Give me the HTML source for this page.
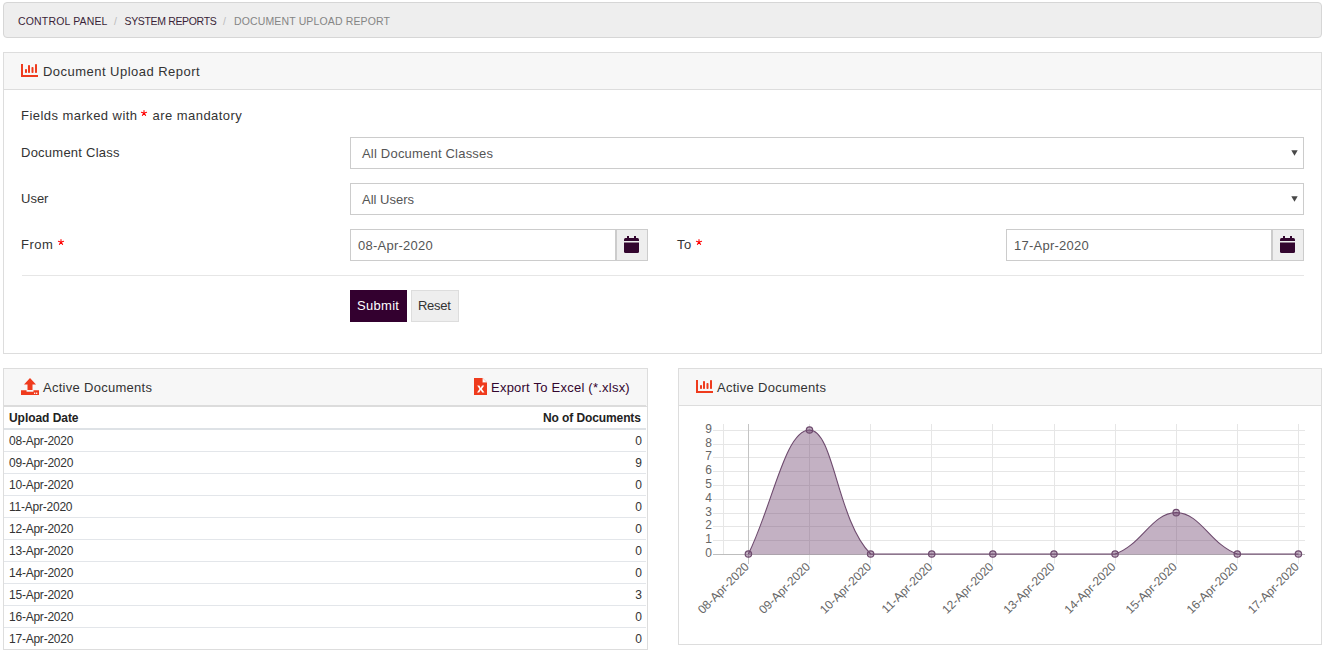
<!DOCTYPE html>
<html><head><meta charset="utf-8">
<style>
*{box-sizing:border-box;margin:0;padding:0}
html,body{width:1325px;height:662px;overflow:hidden;background:#fff}
body{font-family:"Liberation Sans",sans-serif;font-size:13px;color:#333;position:relative}
.a{position:absolute}
.t{position:absolute;line-height:1;white-space:nowrap}
.bc{left:3px;top:2px;width:1319px;height:36px;background:#eee;border:1px solid #d6d6d6;border-radius:4px}
.bt{font-size:10.5px;color:#3a1f38}
.panel{position:absolute;border:1px solid #ddd;background:#fff}
.ph{position:absolute;left:0;top:0;right:0;background:#f7f7f7;border-bottom:1px solid #ddd}
.f13{font-size:13px}
.inp{position:absolute;border:1px solid #ccc;background:#fff}
.red{color:#e8141e}
.addon{position:absolute;background:#eee;border:1px solid #ccc}
.gray{color:#555}
.row{position:absolute;left:4px;width:642px;height:1px;background:#e3e6ea}
.td{font-size:12px;color:#333;letter-spacing:-0.23px}
.num{font-size:12px;color:#333}
</style></head>
<body>
<!-- breadcrumb -->
<div class="a bc"></div>
<div class="t bt" style="left:18px;top:16px;letter-spacing:0.16px">CONTROL PANEL</div>
<div class="t bt" style="left:114px;top:16px;color:#bbb">/</div>
<div class="t bt" style="left:124.5px;top:16px;letter-spacing:-0.34px">SYSTEM REPORTS</div>
<div class="t bt" style="left:223px;top:16px;color:#bbb">/</div>
<div class="t bt" style="left:234px;top:16px;letter-spacing:0.14px;color:#858585">DOCUMENT UPLOAD REPORT</div>

<!-- panel 1 -->
<div class="panel" style="left:3px;top:52px;width:1319px;height:302px">
  <div class="ph" style="height:37px"></div>
</div>
<svg class="a" style="left:21px;top:64px" width="18" height="14" viewBox="0 0 18 14">
  <g fill="#ef3b1d"><rect x="0" y="0" width="2" height="13"/><rect x="0" y="11" width="17" height="2"/>
  <rect x="4" y="5" width="2" height="4" rx="0.8"/><rect x="7" y="1" width="2" height="8" rx="0.8"/><rect x="10.5" y="3" width="2" height="6" rx="0.8"/><rect x="14" y="0" width="2" height="9" rx="0.8"/></g>
</svg>
<div class="t f13" style="left:43px;top:65px;letter-spacing:0.47px">Document Upload Report</div>

<div class="t f13" style="left:21px;top:108.6px;letter-spacing:0.45px">Fields marked with <span style="display:inline-block;width:7px"></span> are mandatory</div><svg class="a" style="left:139.9px;top:108.7px" width="8" height="8" viewBox="0 0 8 8"><path d="M4,4.2 L4.00,1.50 M4,4.2 L6.57,3.37 M4,4.2 L5.59,6.38 M4,4.2 L2.41,6.38 M4,4.2 L1.43,3.37" stroke="#ff0000" stroke-width="1.05" stroke-linecap="round" fill="none"/></svg>
<div class="t f13" style="left:21px;top:145.7px;letter-spacing:0.24px">Document Class</div>
<div class="inp" style="left:350px;top:137px;width:954px;height:32px"></div>
<div class="t f13 gray" style="left:362px;top:147px;letter-spacing:0.2px">All Document Classes</div>
<svg class="a" style="left:1291px;top:150px" width="7" height="6" viewBox="0 0 7 6"><path d="M0.3,0.3 H6.7 L3.5,5.7 Z" fill="#484848"/></svg>

<div class="t f13" style="left:21px;top:192px">User</div>
<div class="inp" style="left:350px;top:183px;width:954px;height:32px"></div>
<div class="t f13 gray" style="left:362px;top:193px">All Users</div>
<svg class="a" style="left:1291px;top:196px" width="7" height="6" viewBox="0 0 7 6"><path d="M0.3,0.3 H6.7 L3.5,5.7 Z" fill="#484848"/></svg>

<div class="t f13" style="left:21px;top:238px;letter-spacing:0.5px">From</div><svg class="a" style="left:56.8px;top:237.9px" width="8" height="8" viewBox="0 0 8 8"><path d="M4,4.2 L4.00,1.50 M4,4.2 L6.57,3.37 M4,4.2 L5.59,6.38 M4,4.2 L2.41,6.38 M4,4.2 L1.43,3.37" stroke="#ff0000" stroke-width="1.05" stroke-linecap="round" fill="none"/></svg>
<div class="inp" style="left:350px;top:229px;width:266px;height:32px"></div>
<div class="t f13 gray" style="left:358px;top:239px;letter-spacing:0.24px">08-Apr-2020</div>
<div class="addon" style="left:616px;top:229px;width:32px;height:32px"></div>
<svg class="a" style="left:624px;top:236px" width="15" height="17" viewBox="0 0 15 17">
  <g fill="#33062f"><rect x="3" y="0" width="2" height="3"/><rect x="10" y="0" width="2" height="3"/>
  <path d="M1.5,2 H13.5 Q15,2 15,3.5 V5.1 H0 V3.5 Q0,2 1.5,2 Z"/><path d="M0,6.4 H15 V15.5 Q15,17 13.5,17 H1.5 Q0,17 0,15.5 Z"/></g>
</svg>

<div class="t f13" style="left:677px;top:238px;letter-spacing:0.5px">To</div><svg class="a" style="left:695.3px;top:237.9px" width="8" height="8" viewBox="0 0 8 8"><path d="M4,4.2 L4.00,1.50 M4,4.2 L6.57,3.37 M4,4.2 L5.59,6.38 M4,4.2 L2.41,6.38 M4,4.2 L1.43,3.37" stroke="#ff0000" stroke-width="1.05" stroke-linecap="round" fill="none"/></svg>
<div class="inp" style="left:1006px;top:229px;width:266px;height:32px"></div>
<div class="t f13 gray" style="left:1014px;top:239px;letter-spacing:0.24px">17-Apr-2020</div>
<div class="addon" style="left:1272px;top:229px;width:32px;height:32px"></div>
<svg class="a" style="left:1280px;top:236px" width="15" height="17" viewBox="0 0 15 17">
  <g fill="#33062f"><rect x="3" y="0" width="2" height="3"/><rect x="10" y="0" width="2" height="3"/>
  <path d="M1.5,2 H13.5 Q15,2 15,3.5 V5.1 H0 V3.5 Q0,2 1.5,2 Z"/><path d="M0,6.4 H15 V15.5 Q15,17 13.5,17 H1.5 Q0,17 0,15.5 Z"/></g>
</svg>

<div class="a" style="left:22px;top:275px;width:1282px;height:1px;background:#e6e6e6"></div>
<div class="a" style="left:350px;top:290px;width:57px;height:32px;background:#33002f"></div>
<div class="t f13" style="left:357px;top:299px;color:#fff;letter-spacing:0.3px">Submit</div>
<div class="a" style="left:411px;top:290px;width:48px;height:32px;background:#eee;border:1px solid #ddd"></div>
<div class="t f13" style="left:418px;top:299px;letter-spacing:-0.3px">Reset</div>

<!-- left panel -->
<div class="panel" style="left:3px;top:368px;width:645px;height:282px">
  <div class="ph" style="height:38px"></div>
</div>
<svg class="a" style="left:21px;top:378px" width="18" height="18" viewBox="0 0 18 18">
  <g fill="#ef3b1d"><path d="M9,0 L15,6.5 H11.5 V12 H6.5 V6.5 H3 Z"/><path d="M0,12.2 H5.5 V13.2 Q5.5,13.7 6,13.7 H12 Q12.5,13.7 12.5,13.2 V12.2 H18 V17 H0 Z"/></g>
  <g fill="#fff"><rect x="13" y="14.6" width="1.3" height="1.3"/><rect x="15" y="14.6" width="1.3" height="1.3"/></g>
</svg>
<div class="t f13" style="left:43px;top:381px;letter-spacing:0.28px">Active Documents</div>
<svg class="a" style="left:474px;top:378px" width="13" height="17" viewBox="0 0 13 17">
  <path d="M0,0 H8.5 L13,4.5 V17 H0 Z" fill="#ef3b1d"/><path d="M8.5,0 V4.5 H13 Z" fill="#f6dcd6"/><path d="M9,1 L12,4 H9 Z" fill="#fff"/>
  <path d="M3.2,7.6 L5.4,7.6 L6.7,9.9 L8,7.6 L10.2,7.6 L7.9,11 L10.4,14.4 L8.2,14.4 L6.7,12.1 L5.2,14.4 L3,14.4 L5.5,11 Z" fill="#fff"/>
</svg>
<div class="t f13" style="left:491px;top:381px;letter-spacing:0.23px;color:#33062f">Export To Excel (*.xlsx)</div>
<div class="a" style="left:4px;top:405px;width:642px;height:2px;background:#dcdcdc"></div>
<div class="t" style="left:9px;top:411.8px;font-size:12px;font-weight:bold;color:#222;letter-spacing:-0.05px">Upload Date</div>
<div class="t" style="left:543px;top:411.8px;font-size:12px;font-weight:bold;color:#222;letter-spacing:-0.1px">No of Documents</div>
<div class="a" style="left:4px;top:428px;width:642px;height:2px;background:#dee2e6"></div>
<div class="t td" style="left:9px;top:434.8px">08-Apr-2020</div><div class="t num" style="right:683px;top:434.8px">0</div>
<div class="row" style="top:451px"></div>
<div class="t td" style="left:9px;top:456.8px">09-Apr-2020</div><div class="t num" style="right:683px;top:456.8px">9</div>
<div class="row" style="top:473px"></div>
<div class="t td" style="left:9px;top:478.8px">10-Apr-2020</div><div class="t num" style="right:683px;top:478.8px">0</div>
<div class="row" style="top:495px"></div>
<div class="t td" style="left:9px;top:500.8px">11-Apr-2020</div><div class="t num" style="right:683px;top:500.8px">0</div>
<div class="row" style="top:517px"></div>
<div class="t td" style="left:9px;top:522.8px">12-Apr-2020</div><div class="t num" style="right:683px;top:522.8px">0</div>
<div class="row" style="top:539px"></div>
<div class="t td" style="left:9px;top:544.8px">13-Apr-2020</div><div class="t num" style="right:683px;top:544.8px">0</div>
<div class="row" style="top:561px"></div>
<div class="t td" style="left:9px;top:566.8px">14-Apr-2020</div><div class="t num" style="right:683px;top:566.8px">0</div>
<div class="row" style="top:583px"></div>
<div class="t td" style="left:9px;top:588.8px">15-Apr-2020</div><div class="t num" style="right:683px;top:588.8px">3</div>
<div class="row" style="top:605px"></div>
<div class="t td" style="left:9px;top:610.8px">16-Apr-2020</div><div class="t num" style="right:683px;top:610.8px">0</div>
<div class="row" style="top:627px"></div>
<div class="t td" style="left:9px;top:632.8px">17-Apr-2020</div><div class="t num" style="right:683px;top:632.8px">0</div>

<!-- right panel -->
<div class="panel" style="left:678px;top:368px;width:644px;height:277px">
  <div class="ph" style="height:37px"></div>
</div>
<div class="t f13" style="left:717px;top:381px;letter-spacing:0.28px">Active Documents</div>
<svg class="a" style="left:696px;top:380px" width="18" height="14" viewBox="0 0 18 14">
  <g fill="#ef3b1d"><rect x="0" y="0" width="2" height="13"/><rect x="0" y="11" width="17" height="2"/>
  <rect x="4" y="5" width="2" height="4" rx="0.8"/><rect x="7" y="1" width="2" height="8" rx="0.8"/><rect x="10.5" y="3" width="2" height="6" rx="0.8"/><rect x="14" y="0" width="2" height="9" rx="0.8"/></g>
</svg>
<svg class="a" style="left:0;top:0" width="1325" height="662" viewBox="0 0 1325 662">
<g shape-rendering="crispEdges" stroke-width="1">
<line x1="713" y1="540.5" x2="1304.5" y2="540.5" stroke="#e6e6e6"/>
<line x1="713" y1="526.5" x2="1304.5" y2="526.5" stroke="#e6e6e6"/>
<line x1="713" y1="513.5" x2="1304.5" y2="513.5" stroke="#e6e6e6"/>
<line x1="713" y1="499.5" x2="1304.5" y2="499.5" stroke="#e6e6e6"/>
<line x1="713" y1="485.5" x2="1304.5" y2="485.5" stroke="#e6e6e6"/>
<line x1="713" y1="471.5" x2="1304.5" y2="471.5" stroke="#e6e6e6"/>
<line x1="713" y1="457.5" x2="1304.5" y2="457.5" stroke="#e6e6e6"/>
<line x1="713" y1="444.5" x2="1304.5" y2="444.5" stroke="#e6e6e6"/>
<line x1="713" y1="430.5" x2="1304.5" y2="430.5" stroke="#e6e6e6"/>
<line x1="723.5" y1="424" x2="723.5" y2="554" stroke="#e6e6e6"/>
<line x1="809.5" y1="424" x2="809.5" y2="563.5" stroke="#e6e6e6"/>
<line x1="870.5" y1="424" x2="870.5" y2="563.5" stroke="#e6e6e6"/>
<line x1="931.5" y1="424" x2="931.5" y2="563.5" stroke="#e6e6e6"/>
<line x1="992.5" y1="424" x2="992.5" y2="563.5" stroke="#e6e6e6"/>
<line x1="1054.5" y1="424" x2="1054.5" y2="563.5" stroke="#e6e6e6"/>
<line x1="1115.5" y1="424" x2="1115.5" y2="563.5" stroke="#e6e6e6"/>
<line x1="1176.5" y1="424" x2="1176.5" y2="563.5" stroke="#e6e6e6"/>
<line x1="1237.5" y1="424" x2="1237.5" y2="563.5" stroke="#e6e6e6"/>
<line x1="1298.5" y1="424" x2="1298.5" y2="563.5" stroke="#e6e6e6"/>
<line x1="748.5" y1="424" x2="748.5" y2="563.5" stroke="#c4c4c4"/>
<line x1="713" y1="554.5" x2="1304.5" y2="554.5" stroke="#bdbdbd"/>
</g>
<path d="M748.40,554.00 C772.84,504.40 785.07,430.00 809.51,430.00 C833.96,430.00 836.72,519.60 870.62,554.00 C885.61,554.00 907.29,554.00 931.73,554.00 C956.18,554.00 968.40,554.00 992.84,554.00 C1017.29,554.00 1029.51,554.00 1053.96,554.00 C1078.40,554.00 1092.92,554.00 1115.07,554.00 C1141.81,544.96 1151.73,512.67 1176.18,512.67 C1200.62,512.67 1210.55,544.96 1237.29,554.00 C1259.44,554.00 1273.96,554.00 1298.40,554.00 L1298.40,554.5 L748.40,554.5 Z" fill="rgba(105,60,105,0.4)"/>
<path d="M748.40,554.00 C772.84,504.40 785.07,430.00 809.51,430.00 C833.96,430.00 836.72,519.60 870.62,554.00 C885.61,554.00 907.29,554.00 931.73,554.00 C956.18,554.00 968.40,554.00 992.84,554.00 C1017.29,554.00 1029.51,554.00 1053.96,554.00 C1078.40,554.00 1092.92,554.00 1115.07,554.00 C1141.81,544.96 1151.73,512.67 1176.18,512.67 C1200.62,512.67 1210.55,544.96 1237.29,554.00 C1259.44,554.00 1273.96,554.00 1298.40,554.00" fill="none" stroke="#6e4b6e" stroke-width="1.1"/>
<circle cx="748.40" cy="554.00" r="3.2" fill="rgba(105,60,105,0.4)" stroke="#6e4b6e" stroke-width="1.2"/>
<circle cx="809.51" cy="430.00" r="3.2" fill="rgba(105,60,105,0.4)" stroke="#6e4b6e" stroke-width="1.2"/>
<circle cx="870.62" cy="554.00" r="3.2" fill="rgba(105,60,105,0.4)" stroke="#6e4b6e" stroke-width="1.2"/>
<circle cx="931.73" cy="554.00" r="3.2" fill="rgba(105,60,105,0.4)" stroke="#6e4b6e" stroke-width="1.2"/>
<circle cx="992.84" cy="554.00" r="3.2" fill="rgba(105,60,105,0.4)" stroke="#6e4b6e" stroke-width="1.2"/>
<circle cx="1053.96" cy="554.00" r="3.2" fill="rgba(105,60,105,0.4)" stroke="#6e4b6e" stroke-width="1.2"/>
<circle cx="1115.07" cy="554.00" r="3.2" fill="rgba(105,60,105,0.4)" stroke="#6e4b6e" stroke-width="1.2"/>
<circle cx="1176.18" cy="512.67" r="3.2" fill="rgba(105,60,105,0.4)" stroke="#6e4b6e" stroke-width="1.2"/>
<circle cx="1237.29" cy="554.00" r="3.2" fill="rgba(105,60,105,0.4)" stroke="#6e4b6e" stroke-width="1.2"/>
<circle cx="1298.40" cy="554.00" r="3.2" fill="rgba(105,60,105,0.4)" stroke="#6e4b6e" stroke-width="1.2"/>
<g font-family="Liberation Sans" font-size="12" fill="#666">
<text x="712" y="557" text-anchor="end">0</text>
<text x="712" y="543" text-anchor="end">1</text>
<text x="712" y="529" text-anchor="end">2</text>
<text x="712" y="516" text-anchor="end">3</text>
<text x="712" y="502" text-anchor="end">4</text>
<text x="712" y="488" text-anchor="end">5</text>
<text x="712" y="474" text-anchor="end">6</text>
<text x="712" y="460" text-anchor="end">7</text>
<text x="712" y="447" text-anchor="end">8</text>
<text x="712" y="433" text-anchor="end">9</text>
<text transform="translate(747.00,564.6) rotate(-45)" text-anchor="end" y="4">08-Apr-2020</text>
<text transform="translate(808.11,564.6) rotate(-45)" text-anchor="end" y="4">09-Apr-2020</text>
<text transform="translate(869.22,564.6) rotate(-45)" text-anchor="end" y="4">10-Apr-2020</text>
<text transform="translate(930.33,564.6) rotate(-45)" text-anchor="end" y="4">11-Apr-2020</text>
<text transform="translate(991.44,564.6) rotate(-45)" text-anchor="end" y="4">12-Apr-2020</text>
<text transform="translate(1052.56,564.6) rotate(-45)" text-anchor="end" y="4">13-Apr-2020</text>
<text transform="translate(1113.67,564.6) rotate(-45)" text-anchor="end" y="4">14-Apr-2020</text>
<text transform="translate(1174.78,564.6) rotate(-45)" text-anchor="end" y="4">15-Apr-2020</text>
<text transform="translate(1235.89,564.6) rotate(-45)" text-anchor="end" y="4">16-Apr-2020</text>
<text transform="translate(1297.00,564.6) rotate(-45)" text-anchor="end" y="4">17-Apr-2020</text>
</g></svg>

</body></html>
